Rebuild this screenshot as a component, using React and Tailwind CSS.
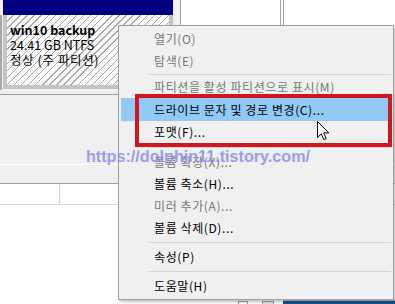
import { Fragment } from 'react';

const MENU = [
  { label: '열기(O)', off: true, h: 'h-[22px]' },
  { label: '탐색(E)', off: true, h: 'h-[22px]' },
  { sep: 'h-[4px]' },
  { label: '파티션을 활성 파티션으로 표시(M)', off: true, h: 'h-[22px]' },
  { label: '드라이브 문자 및 경로 변경(C)...', active: true, h: 'h-[23px]' },
  { label: '포맷(F)...', h: 'h-[22px]' },
  { sep: 'h-[8px]' },
  { label: '볼륨 확장(X)...', off: true, h: 'h-[22px]' },
  { label: '볼륨 축소(H)...', h: 'h-[22px]' },
  { label: '미러 추가(A)...', off: true, h: 'h-[22px]' },
  { label: '볼륨 삭제(D)...', h: 'h-[22px]' },
  { sep: 'h-[7px]' },
  { label: '속성(P)', h: 'h-[22px]' },
  { sep: 'h-[7px]' },
  { label: '도움말(H)', h: 'h-[22px]' },
];

function ContextMenu() {
  return (
    <div className="absolute left-[118px] top-[25px] w-[276px] h-[275px] bg-[#f0f0f0] border border-[#a0a0a0] pt-[2px] shadow-[2px_2px_3px_rgba(0,0,0,0.25)]">
      {MENU.map((m, i) =>
        m.sep ? (
          <div key={i} className={`${m.sep} flex items-center pl-[30px] pr-[2px]`}>
            <div className="h-px w-full bg-[#d5d5d5]" />
          </div>
        ) : (
          <div
            key={i}
            className={`${m.h} mx-[2px] pl-[33px] flex items-center text-[12px] tracking-[0.6px] leading-none whitespace-nowrap ${
              m.active ? 'bg-[#91c9f7]' : ''
            } ${m.off ? 'text-[#767676]' : 'text-black'}`}
          >
            {m.label}
          </div>
        )
      )}
    </div>
  );
}

function Cursor() {
  return (
    <svg className="absolute left-[317px] top-[121px]" width="13" height="20" viewBox="0 0 13 20">
      <path d="M0.5 0.5 L0.5 16.5 L4.3 12.8 L6.8 18.6 L9.2 17.6 L6.7 11.9 L11.8 11.9 Z" fill="#fff" stroke="#000" strokeWidth="1" strokeLinejoin="miter" />
    </svg>
  );
}

export default function App() {
  return (
    <div className="relative w-[395px] h-[304px] overflow-hidden bg-white font-['Noto_Sans_CJK_KR','Noto_Sans',sans-serif] flex flex-col">
      {/* top row: partition block + disk area */}
      <div className="h-[95px] flex">
        <div className="w-[181px] h-full bg-[#f0f0f0] border-b border-[#a0a0a0] flex">
          <div className="w-[2px] bg-[#a9a9a9] mt-[15px] mb-[4px]" />
          <div className="ml-[1px] w-[170px] flex flex-col pb-[5px]">
            <div className="h-[15px] bg-[#000080]" />
            <div className="flex-1 border-[4px] border-t-0 border-[#c4c4c4] bg-[repeating-linear-gradient(135deg,#fbfbfb_0px,#fbfbfb_4px,#a8a8a8_4px,#a8a8a8_5px)] pl-[3px] pt-[7px] text-[12.5px] leading-[15px] text-black">
              <div className="font-bold text-[12.5px] leading-[15px]">win10 backup</div>
              <div className="leading-[15px]">24.41 GB NTFS</div>
              <div className="leading-[15px] tracking-[0.6px]">정상 (주 파티션)</div>
            </div>
          </div>
          <div className="ml-auto w-px bg-[#a0a0a0]" />
        </div>
        <div className="flex-1 flex pl-[99px]">
          <div className="w-px bg-[#a0a0a0]" />
          <div className="w-[2px]" />
          <div className="w-px bg-[#a0a0a0]" />
        </div>
      </div>

      {/* status area */}
      <div className="h-[69px] bg-[#f0f0f0]" />
      <div className="h-px bg-white" />
      <div className="h-[18px] bg-[#f0f0f0]" />
      <div className="h-px bg-[#a0a0a0]" />

      {/* list area */}
      <div className="flex-1 bg-white">
        <div className="h-[21px] flex border-b border-[#d9d9d9]">
          <div className="w-[60px] border-r border-[#d0d0d0]" />
        </div>
      </div>

      {/* taskbar strip */}
      <div className="h-[4px] flex">
        <div className="w-[283px] bg-white flex items-end">
          <div className="ml-[238px] w-[10px] h-[3px] border-t border-x border-[#9a9a9a]" />
          <div className="ml-[14px] w-[12px] h-[3px] border-t border-x border-[#9a9a9a] bg-[#e6e6e6]" />
        </div>
        <div className="flex-1 bg-[#1c4f8c] border-t border-[#9cc8ee]" />
      </div>

      <ContextMenu />

      <div className="absolute left-[86px] top-[148px] text-[17px] leading-none font-bold font-['Liberation_Sans',sans-serif] text-[#9393ef] opacity-90 origin-left scale-x-[0.95] whitespace-nowrap">
        https://dolphin11.tistory.com/
      </div>

      <div className="absolute left-[135px] top-[94px] w-[257px] h-[53px] border-[4px] border-[#d3161d]" />

      <Cursor />
    </div>
  );
}
